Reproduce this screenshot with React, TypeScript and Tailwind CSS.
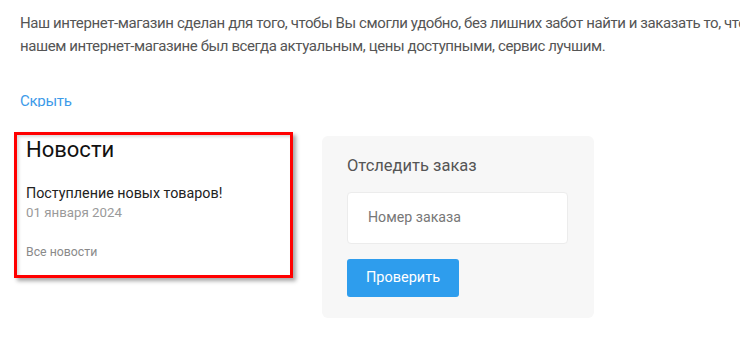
import React from "react";

export default function App() {
  const font = { fontFamily: "Roboto, 'Noto Sans', sans-serif" };
  return (
    <div className="w-[740px] h-[353px] bg-white overflow-hidden font-['Roboto',_'Noto_Sans',_sans-serif]" style={font}>
      <div className="h-[107px] overflow-hidden pl-[20px]">
        <div className="pt-[12px] text-[15px] leading-[23px] tracking-[-0.4px] text-[#555555] whitespace-nowrap">
          <div>Наш интернет-магазин сделан для того, чтобы Вы смогли удобно, без лишних забот найти и заказать то, что Вам нужно. Мы стараемся, чтобы ассортимент в</div>
          <div>нашем интернет-магазине был всегда актуальным, цены доступными, сервис лучшим.</div>
        </div>
        <div className="mt-[32px] text-[15px] leading-[23px] tracking-[-0.3px] text-[#3d9be9]">Скрыть</div>
      </div>
      <div className="flex items-start">
        <div className="ml-[14px] mt-[25px] w-[279px] h-[146px] border-[3px] border-[#ff0000] bg-white shadow-[3px_3px_4px_rgba(0,0,0,0.35),inset_2px_2px_3px_rgba(0,0,0,0.15)] pl-[9px] pt-[2px] flex flex-col">
          <div className="text-[22px] leading-[26px] text-[#111111]">Новости</div>
          <div className="mt-[20px] text-[14.3px] leading-[20px] text-[#222222]">Поступление новых товаров!</div>
          <div className="mt-[1px] text-[13.3px] leading-[18px] text-[#9a9a9a]">01 января 2024</div>
          <div className="mt-[22px] text-[12.3px] leading-[16px] text-[#8a8a8a]">Все новости</div>
        </div>
        <div className="ml-[29px] mt-[29px] w-[272px] h-[182px] rounded-[6px] bg-[#f7f7f7] pl-[25px] pt-[18px]">
          <div className="text-[16.5px] leading-[24px] text-[#555555]">Отследить заказ</div>
          <div className="mt-[14px] w-[221px] h-[52px] bg-white border border-[#ececec] rounded-[4px] flex items-center pl-[20px] text-[14.2px] text-[#777777]">
            Номер заказа
          </div>
          <div className="mt-[15px] w-[112px] h-[38px] bg-[#2e9ded] rounded-[3px] flex items-center justify-center text-[14.5px] text-white">
            Проверить
          </div>
        </div>
      </div>
    </div>
  );
}
